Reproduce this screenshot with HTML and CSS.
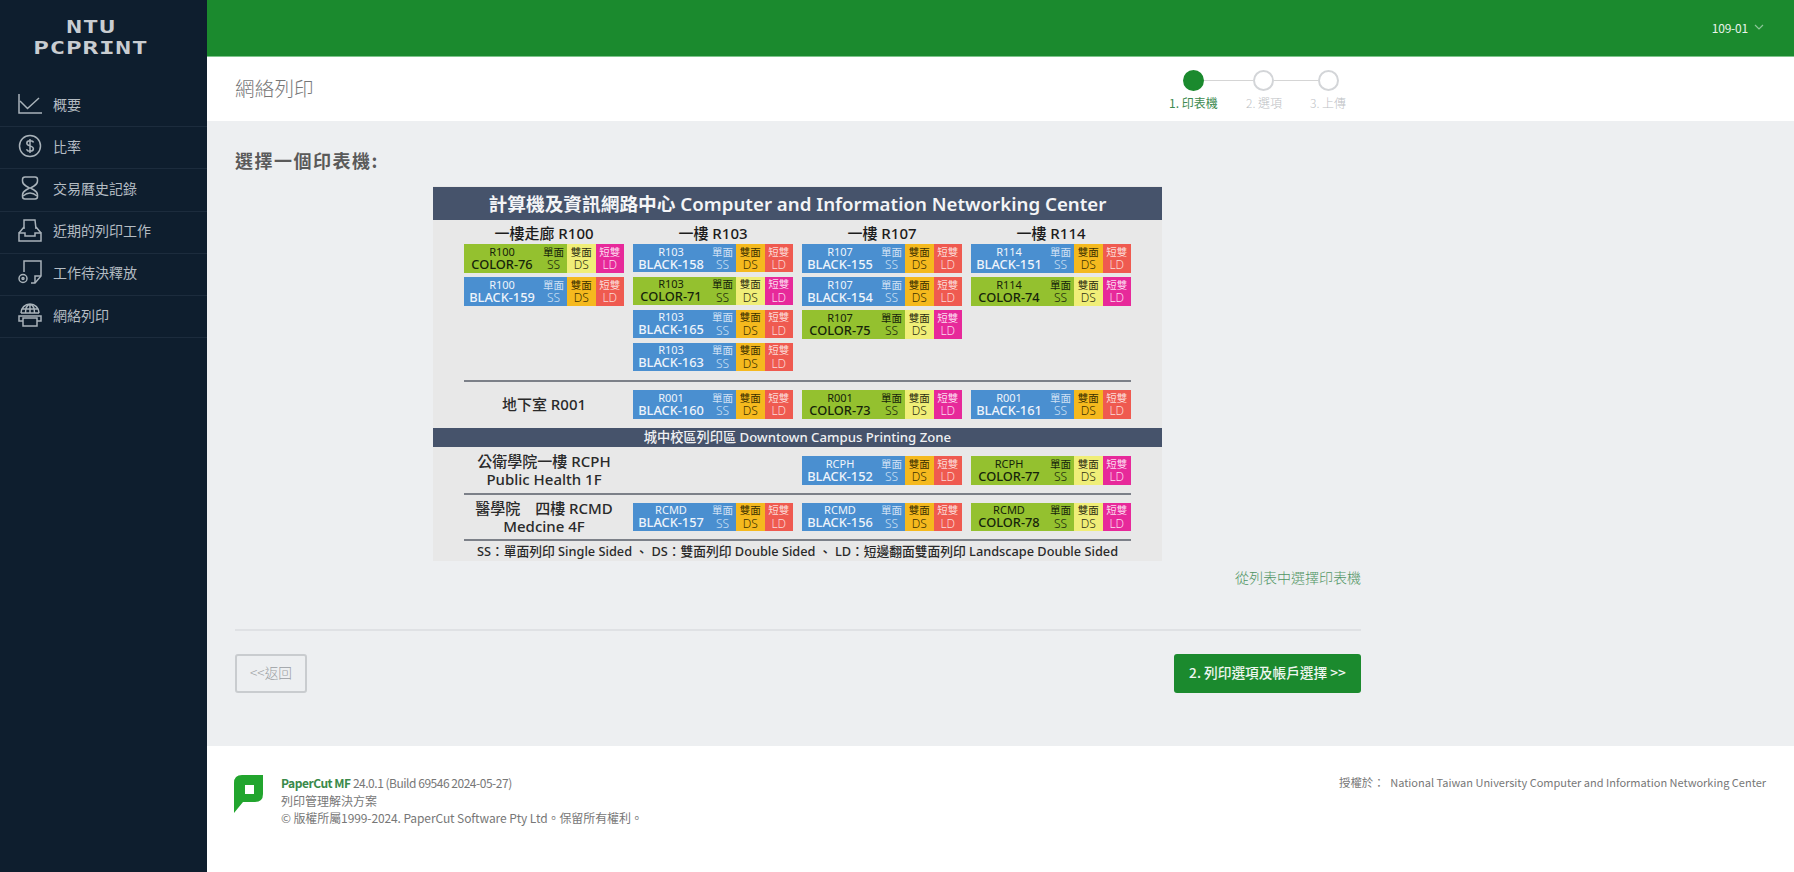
FILE: index.html
```html
<!DOCTYPE html>
<html lang="zh-Hant">
<head>
<meta charset="utf-8">
<title>網絡列印</title>
<link rel="stylesheet" href="styles.css">
</head>
<body>
<div class="app">
  <aside class="sidebar">
    <div class="logo"><span class="logo-top">NTU</span><span class="logo-bottom">PCPRINT</span></div>
    <nav class="nav">
      <a class="nav-item"><svg class="nav-icon" viewBox="0 0 24 24"><path d="M1 2V21H24"/><path d="M2 9L9.500 16.500L21 6"/></svg><span>概要</span></a>
      <a class="nav-item"><svg class="nav-icon" viewBox="0 0 24 24"><circle cx="12" cy="12" r="10.500"/><path d="M15.500 8.500C15 7 13.500 6.800 12 6.800C10 6.800 8.800 7.800 8.800 9.300C8.800 12.500 15.400 11.300 15.400 14.700C15.400 16.300 14 17.200 12 17.200C10.300 17.200 9 16.600 8.500 15.200M12 5V19"/></svg><span>比率</span></a>
      <a class="nav-item"><svg class="nav-icon" viewBox="0 0 24 24"><path d="M7 1H17Q19.500 1 19.500 3.500V5Q19.500 8 16 10L12.500 12L16 14Q19.500 16 19.500 19V20.500Q19.500 23 17 23H7Q4.500 23 4.500 20.500V19Q4.500 16 8 14L11.500 12L8 10Q4.500 8 4.500 5V3.500Q4.500 1 7 1Z"/><path d="M5 20Q12 14 19 20"/></svg><span>交易曆史記錄</span></a>
      <a class="nav-item"><svg class="nav-icon" viewBox="0 0 24 24"><path d="M6 11V2H17L18 11"/><path d="M1 15L6 9M23 15L18 9"/><path d="M1 15H7V18H17V15H23V23H1Z"/></svg><span>近期的列印工作</span></a>
      <a class="nav-item"><svg class="nav-icon" viewBox="0 0 24 24"><path d="M6 12V1H23V16L17 23H13"/><path d="M17 23V16H23"/><circle cx="5" cy="18.500" r="4"/><circle cx="5" cy="18.500" r="1"/></svg><span>工作待決釋放</span></a>
      <a class="nav-item"><svg class="nav-icon" viewBox="0 0 24 24"><path d="M3 10C3 5 7 1 12 1S21 5 21 10M3 10H21M12 1V10M7.500 10C7.500 5 9 2 12 1C15 2 16.500 5 16.500 10M4.500 6H19.500"/><path d="M5 18H1V13H23V18H19"/><path d="M5 15H19V23H5Z"/></svg><span>網絡列印</span></a>
    </nav>
  </aside>
  <div class="content">
    <header class="topbar"><span class="user">109-01</span><svg class="chevron" viewBox="0 0 10 6"><path d="M1 1L5 5L9 1"/></svg></header>
    <div class="titlebar">
      <h1 class="page-title">網絡列印</h1>
      <div class="wizard">
        <div class="track">
          <span class="dot dot-on"></span><span class="line line-a"></span><span class="dot"></span><span class="line line-b"></span><span class="dot"></span>
        </div>
        <div class="step-labels"><span class="step step-on">1. 印表機</span><span class="step">2. 選項</span><span class="step">3. 上傳</span></div>
      </div>
    </div>
    <main class="main">
      <h2 class="heading">選擇一個印表機:</h2>
      <div class="map">
        <div class="map-title">計算機及資訊網路中心 Computer and Information Networking Center</div>
        <div class="grid labels"><span>一樓走廊 R100</span><span>一樓 R103</span><span>一樓 R107</span><span>一樓 R114</span></div>
        <div class="grid">
          <div class="col">
            <div class="card color"><div class="cm"><span class="cn"><small>R100</small>COLOR-76</span><span class="cs">單面<i>SS</i></span></div><div class="ds">雙面<i>DS</i></div><div class="ld">短雙<i>LD</i></div></div>
            <div class="card black"><div class="cm"><span class="cn"><small>R100</small>BLACK-159</span><span class="cs">單面<i>SS</i></span></div><div class="ds">雙面<i>DS</i></div><div class="ld">短雙<i>LD</i></div></div>
          </div>
          <div class="col">
            <div class="card black"><div class="cm"><span class="cn"><small>R103</small>BLACK-158</span><span class="cs">單面<i>SS</i></span></div><div class="ds">雙面<i>DS</i></div><div class="ld">短雙<i>LD</i></div></div>
            <div class="card color"><div class="cm"><span class="cn"><small>R103</small>COLOR-71</span><span class="cs">單面<i>SS</i></span></div><div class="ds">雙面<i>DS</i></div><div class="ld">短雙<i>LD</i></div></div>
            <div class="card black"><div class="cm"><span class="cn"><small>R103</small>BLACK-165</span><span class="cs">單面<i>SS</i></span></div><div class="ds">雙面<i>DS</i></div><div class="ld">短雙<i>LD</i></div></div>
            <div class="card black"><div class="cm"><span class="cn"><small>R103</small>BLACK-163</span><span class="cs">單面<i>SS</i></span></div><div class="ds">雙面<i>DS</i></div><div class="ld">短雙<i>LD</i></div></div>
          </div>
          <div class="col">
            <div class="card black"><div class="cm"><span class="cn"><small>R107</small>BLACK-155</span><span class="cs">單面<i>SS</i></span></div><div class="ds">雙面<i>DS</i></div><div class="ld">短雙<i>LD</i></div></div>
            <div class="card black"><div class="cm"><span class="cn"><small>R107</small>BLACK-154</span><span class="cs">單面<i>SS</i></span></div><div class="ds">雙面<i>DS</i></div><div class="ld">短雙<i>LD</i></div></div>
            <div class="card color"><div class="cm"><span class="cn"><small>R107</small>COLOR-75</span><span class="cs">單面<i>SS</i></span></div><div class="ds">雙面<i>DS</i></div><div class="ld">短雙<i>LD</i></div></div>
          </div>
          <div class="col">
            <div class="card black"><div class="cm"><span class="cn"><small>R114</small>BLACK-151</span><span class="cs">單面<i>SS</i></span></div><div class="ds">雙面<i>DS</i></div><div class="ld">短雙<i>LD</i></div></div>
            <div class="card color"><div class="cm"><span class="cn"><small>R114</small>COLOR-74</span><span class="cs">單面<i>SS</i></span></div><div class="ds">雙面<i>DS</i></div><div class="ld">短雙<i>LD</i></div></div>
          </div>
        </div>
        <div class="divider divider-first"></div>
        <div class="grid row">
          <div class="row-label">地下室 R001</div>
          <div class="card black"><div class="cm"><span class="cn"><small>R001</small>BLACK-160</span><span class="cs">單面<i>SS</i></span></div><div class="ds">雙面<i>DS</i></div><div class="ld">短雙<i>LD</i></div></div>
          <div class="card color"><div class="cm"><span class="cn"><small>R001</small>COLOR-73</span><span class="cs">單面<i>SS</i></span></div><div class="ds">雙面<i>DS</i></div><div class="ld">短雙<i>LD</i></div></div>
          <div class="card black"><div class="cm"><span class="cn"><small>R001</small>BLACK-161</span><span class="cs">單面<i>SS</i></span></div><div class="ds">雙面<i>DS</i></div><div class="ld">短雙<i>LD</i></div></div>
        </div>
        <div class="band">城中校區列印區 Downtown Campus Printing Zone</div>
        <div class="grid row">
          <div class="row-label">公衛學院一樓 RCPH<br>Public Health 1F</div>
          <div></div>
          <div class="card black"><div class="cm"><span class="cn"><small>RCPH</small>BLACK-152</span><span class="cs">單面<i>SS</i></span></div><div class="ds">雙面<i>DS</i></div><div class="ld">短雙<i>LD</i></div></div>
          <div class="card color"><div class="cm"><span class="cn"><small>RCPH</small>COLOR-77</span><span class="cs">單面<i>SS</i></span></div><div class="ds">雙面<i>DS</i></div><div class="ld">短雙<i>LD</i></div></div>
        </div>
        <div class="divider"></div>
        <div class="grid row">
          <div class="row-label">醫學院　四樓 RCMD<br>Medcine 4F</div>
          <div class="card black"><div class="cm"><span class="cn"><small>RCMD</small>BLACK-157</span><span class="cs">單面<i>SS</i></span></div><div class="ds">雙面<i>DS</i></div><div class="ld">短雙<i>LD</i></div></div>
          <div class="card black"><div class="cm"><span class="cn"><small>RCMD</small>BLACK-156</span><span class="cs">單面<i>SS</i></span></div><div class="ds">雙面<i>DS</i></div><div class="ld">短雙<i>LD</i></div></div>
          <div class="card color"><div class="cm"><span class="cn"><small>RCMD</small>COLOR-78</span><span class="cs">單面<i>SS</i></span></div><div class="ds">雙面<i>DS</i></div><div class="ld">短雙<i>LD</i></div></div>
        </div>
        <div class="divider divider-last"></div>
        <div class="legend">SS：單面列印 Single Sided 、 DS：雙面列印 Double Sided 、 LD：短邊翻面雙面列印 Landscape Double Sided</div>
      </div>
      <div class="list-link"><a>從列表中選擇印表機</a></div>
      <hr class="rule">
      <div class="actions">
        <a class="btn btn-back">&lt;&lt;返回</a>
        <a class="btn btn-next">2. 列印選項及帳戶選擇 &gt;&gt;</a>
      </div>
    </main>
    <footer class="footer">
      <div class="brand">
        <svg class="pc-logo" viewBox="0 0 29 38"><path fill-rule="evenodd" d="M8 0H29V19Q29 27 21 27H9L0 38V8Q0 0 8 0ZM11 10V19H20V10Z"/></svg>
        <div class="brand-text">
          <div class="version"><b>PaperCut MF</b> 24.0.1 (Build 69546 2024-05-27)</div>
          <div>列印管理解決方案</div>
          <div class="copyright">© 版權所屬1999-2024. PaperCut Software Pty Ltd。保留所有權利。</div>
        </div>
      </div>
      <div class="license">授權於： <span>National Taiwan University Computer and Information Networking Center</span></div>
    </footer>
  </div>
</div>
</body>
</html>
```
FILE: styles.css
```css
* { box-sizing: border-box; }
html, body { margin: 0; height: 100%; }
body {
  font-family: "Noto Sans CJK TC", "Noto Sans", sans-serif;
  color: #555;
  background: #edeff1;
  overflow: hidden;
}
.app { display: flex; height: 872px; }

.sidebar { width: 206.500px; flex: none; background: #0e1e2e; }
.logo {
  height: 85px;
  width: 182px;
  padding-top: 17px;
  display: flex;
  flex-direction: column;
  align-items: center;
  font-family: "DejaVu Sans Mono", monospace;
  font-size: 18px;
  font-weight: 700;
  line-height: 20.500px;
  color: #c9cdd1;
}
.logo-top { transform: scaleX(1.450); letter-spacing: 0.500px; }
.logo-bottom { transform: scaleX(1.450); letter-spacing: 0.500px; }
.nav-item {
  height: 42.200px;
  display: flex;
  align-items: center;
  padding: 0 0 4px 18px;
  border-bottom: 1px solid #1c2c3d;
  color: #b4bcc3;
  font-size: 14px;
}
.nav-icon {
  width: 24px;
  height: 24px;
  margin-right: 11px;
  fill: none;
  stroke: #a9b3ba;
  stroke-width: 1.500;
  flex: none;
}

.content { flex: 1; display: flex; flex-direction: column; min-width: 0; }
.topbar {
  height: 57px;
  flex: none;
  background: #1b8a2e;
  border-bottom: 1px solid #7fc58c;
  display: flex;
  align-items: center;
  justify-content: flex-end;
  padding: 0 30px 2px 0;
  color: #e8f3ea;
  font-size: 12px;
  letter-spacing: -0.200px;
}
.chevron { width: 10px; height: 6px; margin-left: 6px; fill: none; stroke: #8cc698; stroke-width: 1.200; }

.titlebar {
  height: 64px;
  flex: none;
  background: #fff;
  padding-left: 28.500px;
  display: flex;
  align-items: flex-start;
}
.page-title {
  margin: 0;
  padding-top: 17px;
  font-size: 19.500px;
  line-height: 28px;
  font-weight: 300;
  color: #777;
  width: 947px;
  letter-spacing: 0.200px;
}
.wizard { width: 190px; padding-top: 13px; }
.track { display: flex; align-items: center; padding-left: 1px; }
.dot { width: 21px; height: 21px; border-radius: 50%; border: 2px solid #d3d5d8; background: #fff; flex: none; }
.dot-on { background: #1b8a2e; border-color: #1b8a2e; }
.line { height: 1px; background: #d5d5d5; flex: none; }
.line-a { width: 49px; }
.line-b { width: 44px; }
.step-labels { display: flex; margin-top: 5px; margin-left: -13px; font-size: 12px; line-height: 14px; color: #bcc0c4; }
.step { width: 77px; flex: none; font-weight: 300; }
.step + .step { width: 64px; }
.step-on { color: #3d8a50; font-weight: 400; }

.main { flex: 1; padding: 0 0 0 28.500px; width: 1154px; }
.heading {
  margin: 0;
  padding-top: 26px;
  height: 65px;
  font-size: 18px;
  line-height: 26px;
  font-weight: 700;
  color: #5a5a5a;
  letter-spacing: 1.500px;
}
.map {
  width: 729px;
  height: 375px;
  margin-left: 198px;
  background: #e8e8e8;
  font-family: "Noto Sans", "Noto Sans CJK TC", sans-serif;
  padding-top: 1px;
  color: #1c1c1c;
}
.map-title {
  height: 33px;
  background: #46536b;
  color: #f4f5f7;
  font-size: 18.700px;
  line-height: 33px;
  font-weight: 600;
  text-align: center;
}
.grid {
  display: grid;
  grid-template-columns: repeat(4, 160px);
  column-gap: 9px;
  padding-left: 31px;
}
.labels {
  height: 24px;
  padding-top: 3px;
  font-size: 15px;
  line-height: 21px;
  font-weight: 500;
  text-align: center;
}
.col { display: flex; flex-direction: column; gap: 4.500px; height: 127px; }
.card { height: 28.500px; display: flex; font-size: 10.500px; line-height: 12px; text-align: center; }
.card i { display: block; margin-top: 1.500px; font-style: normal; font-size: 12px; line-height: 12px; font-weight: 300; }
.cm { width: 103px; display: flex; flex: none; padding-top: 1.500px; }
.cn { width: 76px; flex: none; font-size: 12.800px; line-height: 12px; font-weight: 500; }
.cn small { display: block; height: 12px; font-size: 11px; line-height: 12px; font-weight: 400; }
.cs { width: 27px; flex: none; }
.ds, .ld { width: 28.500px; flex: none; padding-top: 1.500px; }
.black .cm { background: #4a8fd0; color: #eef4fb; }
.black .cs { color: #cfe0f4; }
.black .ds { background: #f5b91e; color: #3b3000; }
.black .ld { background: #ef5a50; color: #fbdcd9; }
.color .cm { background: #94c12f; color: #16240a; }
.color .ds { background: #f0ee78; color: #2d2d10; }
.color .ld { background: #e7299a; color: #fcdcef; }
.divider { height: 2px; margin: 8px 31px; background: #7c8088; }
.divider-first { margin-top: 9px; }
.divider-last { margin-bottom: 0; }
.row { align-items: center; grid-template-rows: 28.500px; height: 28.500px; }
.row-label {
  font-size: 15px;
  line-height: 18px;
  font-weight: 500;
  text-align: center;
  color: #2a2a2a;
  white-space: nowrap;
}
.band {
  height: 19.500px;
  margin: 9px 0;
  background: #46536b;
  color: #f0f1f3;
  font-size: 13.200px;
  line-height: 19.500px;
  font-weight: 500;
  text-align: center;
}
.legend {
  font-size: 12.750px;
  line-height: 20px;
  font-weight: 500;
  text-align: center;
  color: #2a2a2a;
  white-space: nowrap;
}
.list-link {
  width: 1126px;
  text-align: right;
  margin-top: 5px;
  font-size: 14px;
  line-height: 22px;
  color: #4f9463;
  font-weight: 300;
}
.rule { width: 1126px; margin: 41px 0 0; height: 2px; border: 0; background: #dfe1e4; }
.actions { width: 1126px; display: flex; justify-content: space-between; margin-top: 23px; }
.btn { height: 39px; border-radius: 3px; font-size: 13.700px; line-height: 36px; text-align: center; }
.btn-back { width: 72px; border: 2px solid #c9cccf; line-height: 32px; color: #9a9ea2; font-weight: 300; }
.btn-next { width: 187px; background: #1b8a2e; color: #eef6f0; font-weight: 500; }

.footer {
  height: 126px;
  flex: none;
  background: #fff;
  display: flex;
  justify-content: space-between;
  padding: 29px 28px 0 27.500px;
  font-size: 12px;
  line-height: 17.500px;
  color: #777;
  font-weight: 400;
}
.brand { display: flex; }
.pc-logo { width: 29px; height: 38px; fill: #22a52e; margin-right: 18px; flex: none; }
.brand-text { margin-top: -1px; }
.version { letter-spacing: -0.480px; }
.copyright { letter-spacing: -0.100px; }
.brand-text b { color: #3a8a4a; font-weight: 700; }
.license { font-size: 11.400px; margin-top: -1px; }
.license span { margin-left: 3px; font-size: 11px; }
```
